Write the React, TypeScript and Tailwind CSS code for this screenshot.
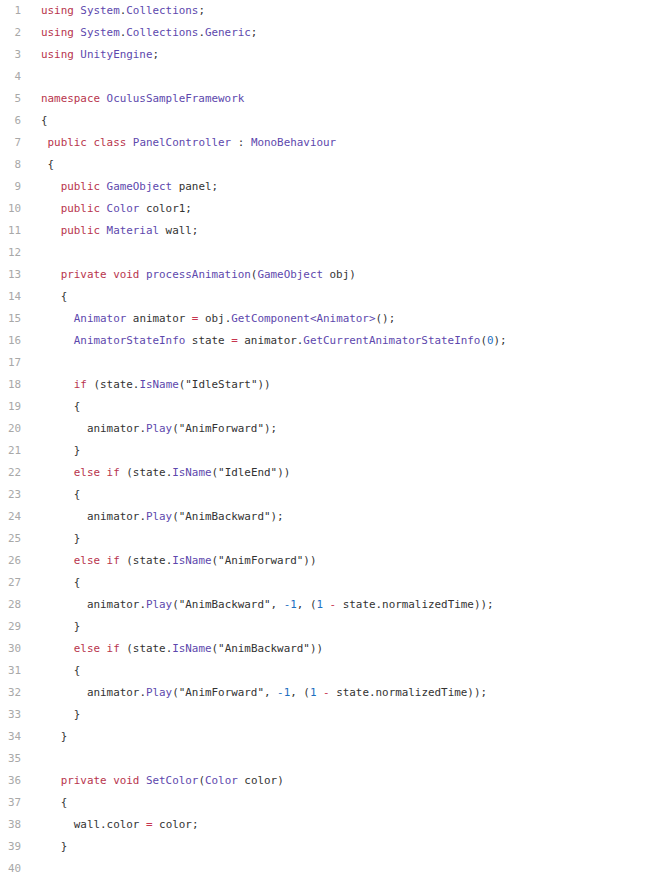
import React from "react";

const code = `using System.Collections;
using System.Collections.Generic;
using UnityEngine;

namespace OculusSampleFramework
{
 public class PanelController : MonoBehaviour
 {
   public GameObject panel;
   public Color color1;
   public Material wall;

   private void processAnimation(GameObject obj)
   {
     Animator animator = obj.GetComponent<Animator>();
     AnimatorStateInfo state = animator.GetCurrentAnimatorStateInfo(0);

     if (state.IsName("IdleStart"))
     {
       animator.Play("AnimForward");
     }
     else if (state.IsName("IdleEnd"))
     {
       animator.Play("AnimBackward");
     }
     else if (state.IsName("AnimForward"))
     {
       animator.Play("AnimBackward", -1, (1 - state.normalizedTime));
     }
     else if (state.IsName("AnimBackward"))
     {
       animator.Play("AnimForward", -1, (1 - state.normalizedTime));
     }
   }

   private void SetColor(Color color)
   {
     wall.color = color;
   }
`;

const keywords = new Set(["using", "namespace", "public", "class", "private", "void", "if", "else"]);

type Tok = { t: string; c: string };

function tokenize(line: string): Tok[] {
  const re = /("[^"]*")|(-?\d+)|([A-Za-z_][A-Za-z0-9_]*)|(\s+)|([=-])|(.)/g;
  const out: Tok[] = [];
  let m: RegExpExecArray | null;
  while ((m = re.exec(line))) {
    const s = m[0];
    if (m[1]) out.push({ t: s, c: "text-[#333333]" });
    else if (m[2]) out.push({ t: s, c: "text-[#1e6fbf]" });
    else if (m[3]) {
      const rest = line.slice(re.lastIndex);
      if (keywords.has(s)) out.push({ t: s, c: "text-[#b8354d]" });
      else if (/^[A-Z]/.test(s) || rest.startsWith("(")) out.push({ t: s, c: "text-[#5d48ad]" });
      else out.push({ t: s, c: "text-[#333333]" });
    } else if (m[5]) out.push({ t: s, c: "text-[#c7354f]" });
    else if (s === "<" || s === ">") out.push({ t: s, c: "text-[#5d48ad]" });
    else out.push({ t: s, c: "text-[#333333]" });
  }
  return out;
}

export default function App() {
  const lines = code.split("\n").slice(0, 40);
  return (
    <div className="w-[665px] h-[884px] bg-white overflow-hidden">
      <div
        className="text-[10.9px] leading-[22px]"
        style={{ fontFamily: '"DejaVu Sans Mono", "Liberation Mono", monospace' }}
      >
        {lines.map((line, i) => (
          <div key={i} className="flex h-[22px]">
            <div className="w-[21px] text-right text-[#a8a8a8] shrink-0">{i + 1}</div>
            <div className="pl-[20px] whitespace-pre">
              {tokenize(line).map((tk, j) => (
                <span key={j} className={tk.c}>
                  {tk.t}
                </span>
              ))}
            </div>
          </div>
        ))}
      </div>
    </div>
  );
}
